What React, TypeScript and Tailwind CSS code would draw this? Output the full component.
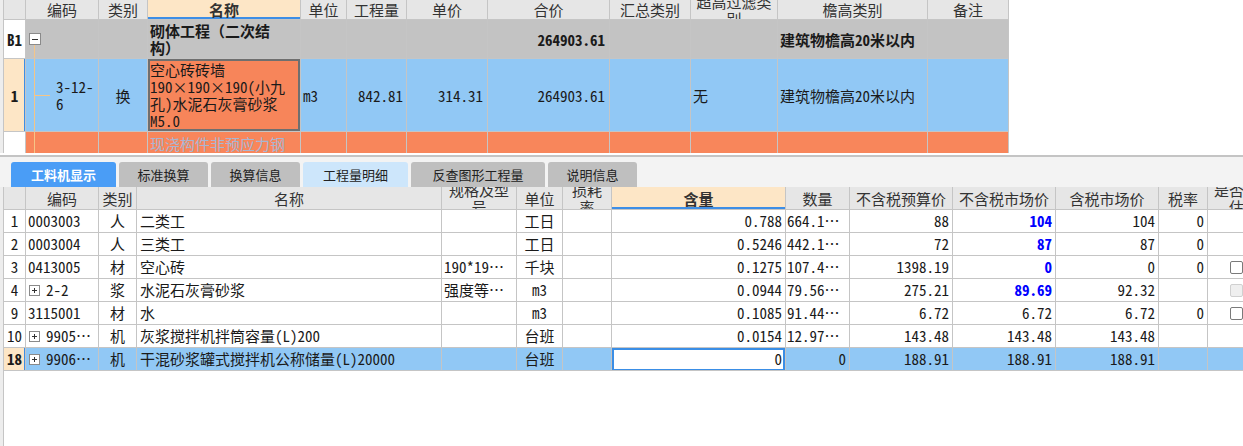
import React from 'react';

type Kids = { w: string; className?: string; children?: React.ReactNode };

function Cell({ w, className = '', children }: Kids) {
  return (
    <div
      className={`${w} relative shrink-0 h-full flex items-center overflow-hidden whitespace-nowrap border-r border-[#c5c5c5] ${className}`}
    >
      {children}
    </div>
  );
}

// frame drawn over a cell (selected row marker, edit box)
const Frame = ({ className }: { className: string }) => (
  <div className={`absolute pointer-events-none ${className}`} />
);

function PlusBox() {
  return (
    <svg width="11" height="11" viewBox="0 0 11 11" className="shrink-0">
      <rect x="0.5" y="0.5" width="10" height="10" fill="#fff" stroke="#8a8a8a" />
      <path d="M3 5.5h5M5.5 3v5" stroke="#333" />
    </svg>
  );
}

function MinusBox() {
  return (
    <svg width="12" height="12" viewBox="0 0 12 12">
      <rect x="0.5" y="0.5" width="11" height="11" fill="#fff" stroke="#8a8a8a" />
      <path d="M3 6.5h6" stroke="#333" />
    </svg>
  );
}

function Check({ disabled }: { disabled?: boolean }) {
  return (
    <div
      className={`w-[13px] h-[13px] rounded-[2px] border ${disabled ? 'bg-[#efefef] border-[#d0d0d0]' : 'bg-white border-[#7a7a7a]'}`}
    />
  );
}

const TreeLine = () => <div className="absolute left-[8px] top-0 bottom-0 w-px bg-[#f6c587]" />;

function TopTable() {
  return (
    <div className="w-[1005px] shrink-0 text-[15px] text-[#1a1a1a]">
      {/* header */}
      <div className="flex h-[20px] bg-[#e6e6e6] border-b border-[#c5c5c5] text-[#333] leading-[17px]">
        <Cell w="w-[22px]" />
        <Cell w="w-[73px]" className="justify-center">编码</Cell>
        <Cell w="w-[49px]" className="justify-center">类别</Cell>
        <Cell w="w-[153px]" className="justify-center font-bold bg-[#fde6c6] shadow-[inset_0_-2px_0_#3d8ee6]">名称</Cell>
        <Cell w="w-[46px]" className="justify-center">单位</Cell>
        <Cell w="w-[60px]" className="justify-center">工程量</Cell>
        <Cell w="w-[81px]" className="justify-center">单价</Cell>
        <Cell w="w-[122px]" className="justify-center">合价</Cell>
        <Cell w="w-[81px]" className="justify-center">汇总类别</Cell>
        <Cell w="w-[87px]" className="justify-center">
          <div className="text-center">超高过滤类<br />别</div>
        </Cell>
        <Cell w="w-[150px]" className="justify-center">檐高类别</Cell>
        <Cell w="w-[81px]" className="justify-center">备注</Cell>
      </div>

      {/* B1 */}
      <div className="flex h-[39px] bg-[#c3c3c3] border-b border-[#c5c5c5] leading-[17px]">
        <Cell w="w-[22px]" className="justify-center bg-white font-bold">B1</Cell>
        <Cell w="w-[73px]">
          <div className="absolute left-[3px] top-[13px]">
            <MinusBox />
          </div>
          <div className="absolute left-[8px] top-[25px] bottom-0 w-px bg-[#f6c587]" />
        </Cell>
        <Cell w="w-[49px]" />
        <Cell w="w-[153px]" className="pl-[2px] font-bold">
          <div>砌体工程（二次结<br />构）</div>
        </Cell>
        <Cell w="w-[46px]" />
        <Cell w="w-[60px]" />
        <Cell w="w-[81px]" />
        <Cell w="w-[122px]" className="justify-end pr-[4px] font-bold">264903.61</Cell>
        <Cell w="w-[81px]" />
        <Cell w="w-[87px]" />
        <Cell w="w-[150px]" className="pl-[2px] font-bold">建筑物檐高20米以内</Cell>
        <Cell w="w-[81px]" />
      </div>

      {/* row 1 */}
      <div className="flex h-[73px] bg-[#91c8f5] border-b border-[#c5c5c5] leading-[17px]">
        <Cell w="w-[22px]" className="justify-center bg-[#fde6c6] font-bold">
          1
          <Frame className="right-[-1px] top-0 bottom-0 w-[2px] bg-[#3d8ee6]" />
        </Cell>
        <Cell w="w-[73px]" className="pl-[30px]">
          <TreeLine />
          <div className="absolute left-[9px] top-[36px] w-[15px] h-px bg-[#f6c587]" />
          <div>3-12-<br />6</div>
        </Cell>
        <Cell w="w-[49px]" className="justify-center">换</Cell>
        <Cell w="w-[153px]" className="bg-[#f7855a] pl-[2px]">
          <Frame className="inset-0 border-2 border-[#6f6f6f]" />
          <div>
            空心砖砖墙
            <br />
            190×190×190(小九
            <br />
            孔)水泥石灰膏砂浆
            <br />
            M5.0
          </div>
        </Cell>
        <Cell w="w-[46px]" className="pl-[2px]">m3</Cell>
        <Cell w="w-[60px]" className="justify-end pr-[3px]">842.81</Cell>
        <Cell w="w-[81px]" className="justify-end pr-[4px]">314.31</Cell>
        <Cell w="w-[122px]" className="justify-end pr-[4px]">264903.61</Cell>
        <Cell w="w-[81px]" />
        <Cell w="w-[87px]" className="pl-[2px]">无</Cell>
        <Cell w="w-[150px]" className="pl-[2px]">建筑物檐高20米以内</Cell>
        <Cell w="w-[81px]" />
      </div>

      {/* cut-off row */}
      <div className="flex h-[21px] bg-[#f8865b] leading-[17px]">
        <Cell w="w-[22px]" className="bg-white" />
        <Cell w="w-[73px]">
          <TreeLine />
        </Cell>
        <Cell w="w-[49px]" />
        <Cell w="w-[153px]" className="items-start pl-[2px] pt-[3px] text-[#a9b6d2]">
          <div>现浇构件非预应力钢<br />筋 圆钢 直径10以内</div>
        </Cell>
        <Cell w="w-[46px]" />
        <Cell w="w-[60px]" />
        <Cell w="w-[81px]" />
        <Cell w="w-[122px]" />
        <Cell w="w-[81px]" />
        <Cell w="w-[87px]" />
        <Cell w="w-[150px]" />
        <Cell w="w-[81px]" />
      </div>
    </div>
  );
}

type Row = {
  n: string;
  code: string;
  expand?: boolean;
  type: string;
  name: string;
  spec: string;
  unit: string;
  amt: string;
  qty: string;
  budget: string;
  market: string;
  marketBlue?: boolean;
  taxed: string;
  rate: string;
  check?: 'on' | 'off';
  selected?: boolean;
};

const rows: Row[] = [
  { n: '1', code: '0003003', type: '人', name: '二类工', spec: '', unit: '工日', amt: '0.788', qty: '664.1…', budget: '88', market: '104', marketBlue: true, taxed: '104', rate: '0' },
  { n: '2', code: '0003004', type: '人', name: '三类工', spec: '', unit: '工日', amt: '0.5246', qty: '442.1…', budget: '72', market: '87', marketBlue: true, taxed: '87', rate: '0' },
  { n: '3', code: '0413005', type: '材', name: '空心砖', spec: '190*19…', unit: '千块', amt: '0.1275', qty: '107.4…', budget: '1398.19', market: '0', marketBlue: true, taxed: '0', rate: '0', check: 'on' },
  { n: '4', code: '2-2', expand: true, type: '浆', name: '水泥石灰膏砂浆', spec: '强度等…', unit: 'm3', amt: '0.0944', qty: '79.56…', budget: '275.21', market: '89.69', marketBlue: true, taxed: '92.32', rate: '', check: 'off' },
  { n: '9', code: '3115001', type: '材', name: '水', spec: '', unit: 'm3', amt: '0.1085', qty: '91.44…', budget: '6.72', market: '6.72', taxed: '6.72', rate: '0', check: 'on' },
  { n: '10', code: '9905…', expand: true, type: '机', name: '灰浆搅拌机拌筒容量(L)200', spec: '', unit: '台班', amt: '0.0154', qty: '12.97…', budget: '143.48', market: '143.48', taxed: '143.48', rate: '' },
  { n: '18', code: '9906…', expand: true, type: '机', name: '干混砂浆罐式搅拌机公称储量(L)20000', spec: '', unit: '台班', amt: '0', qty: '0', budget: '188.91', market: '188.91', taxed: '188.91', rate: '', selected: true },
];

function BottomTable() {
  return (
    <div className="w-[1262px] shrink-0 text-[15px] text-[#1a1a1a]">
      <div className="flex h-[23px] bg-[#e6e6e6] border-b border-[#c5c5c5] text-[#333] leading-[17px]">
        <Cell w="w-[22px]" />
        <Cell w="w-[73px]" className="justify-center">编码</Cell>
        <Cell w="w-[38px]" className="justify-center">类别</Cell>
        <Cell w="w-[305px]" className="justify-center">名称</Cell>
        <Cell w="w-[75px]" className="justify-center">
          <div className="text-center">规格及型<br />号</div>
        </Cell>
        <Cell w="w-[46px]" className="justify-center">单位</Cell>
        <Cell w="w-[49px]" className="justify-center">
          <div className="text-center">损耗<br />率</div>
        </Cell>
        <Cell w="w-[174px]" className="justify-center font-bold bg-[#fde6c6] shadow-[inset_0_-2px_0_#3d8ee6]">含量</Cell>
        <Cell w="w-[64px]" className="justify-center">数量</Cell>
        <Cell w="w-[103px]" className="justify-center">不含税预算价</Cell>
        <Cell w="w-[103px]" className="justify-center">不含税市场价</Cell>
        <Cell w="w-[103px]" className="justify-center">含税市场价</Cell>
        <Cell w="w-[49px]" className="justify-center">税率</Cell>
        <Cell w="w-[58px]" className="justify-center">
          <div className="text-center">是否暂<br />估</div>
        </Cell>
      </div>

      {rows.map((r) => (
        <div
          key={r.n}
          className={`flex h-[23px] border-b border-[#c5c5c5] ${r.selected ? 'bg-[#91c8f5]' : 'bg-white'}`}
        >
          <Cell w="w-[22px]" className={`justify-center ${r.selected ? 'bg-[#fde6c6] font-bold' : 'bg-white'}`}>
            {r.n}
            {r.selected && <Frame className="right-[-1px] top-0 bottom-0 w-[2px] bg-[#3d8ee6]" />}
          </Cell>
          <Cell w="w-[73px]" className={r.expand ? 'pl-[3px] gap-[6px]' : 'pl-[2px]'}>
            {r.expand && <PlusBox />}
            <span>{r.code}</span>
          </Cell>
          <Cell w="w-[38px]" className="justify-center">{r.type}</Cell>
          <Cell w="w-[305px]" className="pl-[3px]">{r.name}</Cell>
          <Cell w="w-[75px]" className="pl-[2px]">{r.spec}</Cell>
          <Cell w="w-[46px]" className="justify-center">{r.unit}</Cell>
          <Cell w="w-[49px]" />
          <Cell w="w-[174px]" className={`justify-end pr-[3px] ${r.selected ? 'bg-white' : ''}`}>
            {r.amt}
            {r.selected && <Frame className="inset-0 -bottom-px border-2 border-[#3a8ee6]" />}
          </Cell>
          <Cell w="w-[64px]" className={r.qty.endsWith('…') ? 'pl-px' : 'justify-end pr-[3px]'}>
            {r.qty}
          </Cell>
          <Cell w="w-[103px]" className="justify-end pr-[3px]">{r.budget}</Cell>
          <Cell w="w-[103px]" className={`justify-end pr-[3px] ${r.marketBlue ? 'text-[#0000ff] font-bold' : ''}`}>
            {r.market}
          </Cell>
          <Cell w="w-[103px]" className="justify-end pr-[3px]">{r.taxed}</Cell>
          <Cell w="w-[49px]" className="justify-end pr-[3px]">{r.rate}</Cell>
          <Cell w="w-[58px]" className="justify-center">
            {r.check && <Check disabled={r.check === 'off'} />}
          </Cell>
        </div>
      ))}
    </div>
  );
}

const tabs = [
  { label: '工料机显示', w: 'w-[105px]', cls: 'bg-[#4a9df6] text-white font-bold' },
  { label: '标准换算', w: 'w-[89px]', cls: 'bg-[#bfbfbf] text-[#222]' },
  { label: '换算信息', w: 'w-[89px]', cls: 'bg-[#bfbfbf] text-[#222]' },
  { label: '工程量明细', w: 'w-[105px]', cls: 'bg-[#cde6fb] text-[#222]' },
  { label: '反查图形工程量', w: 'w-[134px]', cls: 'bg-[#bfbfbf] text-[#222]' },
  { label: '说明信息', w: 'w-[89px]', cls: 'bg-[#bfbfbf] text-[#222]' },
];

export default function App() {
  return (
    <div className="w-[1243px] h-[446px] overflow-hidden bg-white flex flex-col font-['Noto_Sans_Mono_CJK_SC','Noto_Sans_CJK_SC',sans-serif]">
      <div className="flex h-[153px] shrink-0">
        <div className="w-[4px] shrink-0 bg-[#ededed] border-r border-[#c5c5c5]" />
        <TopTable />
        <div className="flex-1 bg-white" />
      </div>
      <div className="h-[2px] shrink-0 bg-white" />
      <div className="h-[2px] shrink-0 bg-[#c4c4c4]" />
      <div className="h-[30px] shrink-0 bg-[#f3f3f3] flex items-end pl-[11px] gap-[3px]">
        {tabs.map((t) => (
          <div
            key={t.label}
            className={`${t.w} h-[25px] rounded-t-[3px] flex items-center justify-center text-[13px] ${t.cls}`}
          >
            {t.label}
          </div>
        ))}
      </div>
      <div className="flex shrink-0">
        <div className="w-[4px] shrink-0 bg-[#ededed] border-r border-[#c5c5c5]" />
        <BottomTable />
      </div>
      <div className="flex flex-1">
        <div className="w-[4px] shrink-0 bg-[#ededed] border-r border-[#c5c5c5]" />
        <div className="flex-1 bg-white" />
      </div>
    </div>
  );
}
